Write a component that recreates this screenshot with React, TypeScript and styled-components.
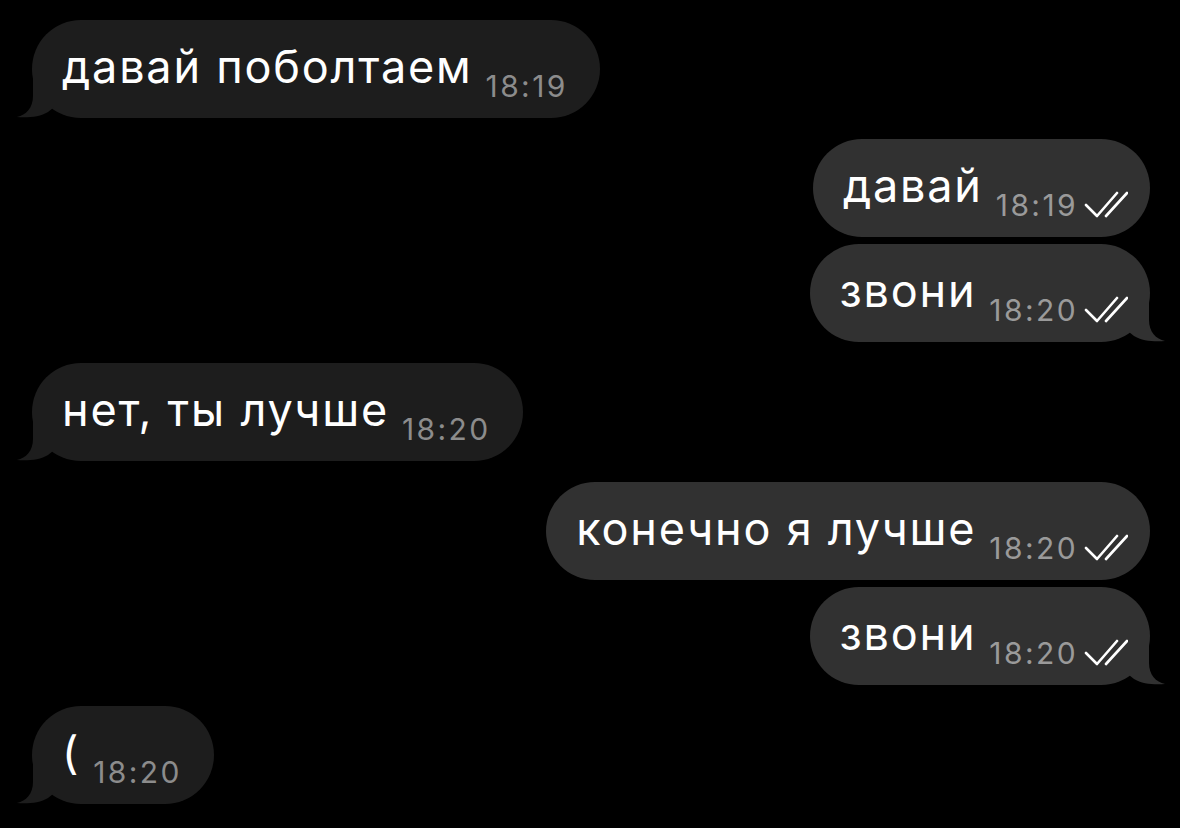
import React from "react";
import styled, { createGlobalStyle } from "styled-components";

const GlobalStyle = createGlobalStyle`
  html, body {
    margin: 0;
    padding: 0;
    background: #000;
  }
  body {
    font-family: Inter, "Liberation Sans", Arial, sans-serif;
    -webkit-font-smoothing: antialiased;
  }
`;

type Side = "in" | "out";

const Thread = styled.div`
  width: 1180px;
  height: 828px;
  box-sizing: border-box;
  padding: 20px 30px 0 32px;
  display: flex;
  flex-direction: column;
  background: #000;
  overflow: hidden;
`;

const Row = styled.div<{ $side: Side; $gap: number }>`
  display: flex;
  justify-content: ${(p) => (p.$side === "out" ? "flex-end" : "flex-start")};
  margin-top: ${(p) => p.$gap}px;
`;

const Bubble = styled.div<{ $side: Side }>`
  position: relative;
  height: 98px;
  box-sizing: border-box;
  padding: 21px ${(p) => (p.$side === "out" ? 22 : 32)}px 0 30px;
  border-radius: 49px;
  background: ${(p) => (p.$side === "out" ? "#313131" : "#1d1d1d")};
  color: #ffffff;
  font-size: 45px;
  line-height: 52px;
  letter-spacing: 1.8px;
  white-space: nowrap;
`;

const Body = styled.span`
  position: relative;
  z-index: 1;
`;

const Meta = styled.span<{ $side: Side }>`
  position: relative;
  z-index: 1;
  display: inline-flex;
  align-items: flex-end;
  gap: 6px;
  margin-left: 13px;
  vertical-align: -14px;
  font-size: 30px;
  line-height: 30px;
  letter-spacing: 2.4px;
  color: ${(p) => (p.$side === "out" ? "#9a9a9a" : "#8c8c8c")};
`;

const Tail = styled.svg<{ $side: Side }>`
  position: absolute;
  bottom: 0;
  width: 44px;
  height: 60px;
  ${(p) =>
    p.$side === "out"
      ? "right: -16px; transform: scaleX(-1);"
      : "left: -16px;"}
`;

const Ticks = styled.svg`
  width: 44px;
  height: 28px;
  margin-bottom: 2px;
  flex: none;
`;

const BubbleTail = ({ side }: { side: Side }) => (
  <Tail $side={side} viewBox="0 0 44 60" aria-hidden>
    <path
      d="M42 6 L17 6 L17 38 C17 50 10 57 1 59 C11 60 24 59 32 54 L42 46 Z"
      fill={side === "out" ? "#313131" : "#1d1d1d"}
    />
  </Tail>
);

const ReadTicks = () => (
  <Ticks viewBox="0 0 44 28" aria-hidden>
    <path
      d="M2 15 L13 26 L33 3 M22 26 L43 3"
      fill="none"
      stroke="#ffffff"
      strokeWidth="2.6"
      strokeLinecap="round"
      strokeLinejoin="round"
    />
  </Ticks>
);

type Message = {
  side: Side;
  text: string;
  time: string;
  tail: boolean;
  gap: number;
};

const messages: Message[] = [
  { side: "in", text: "давай поболтаем", time: "18:19", tail: true, gap: 0 },
  { side: "out", text: "давай", time: "18:19", tail: false, gap: 21 },
  { side: "out", text: "звони", time: "18:20", tail: true, gap: 7 },
  { side: "in", text: "нет, ты лучше", time: "18:20", tail: true, gap: 21 },
  { side: "out", text: "конечно я лучше", time: "18:20", tail: false, gap: 21 },
  { side: "out", text: "звони", time: "18:20", tail: true, gap: 7 },
  { side: "in", text: "(", time: "18:20", tail: true, gap: 21 },
];

export default function App() {
  return (
    <>
      <GlobalStyle />
      <Thread>
        {messages.map((m, i) => (
          <Row key={i} $side={m.side} $gap={m.gap}>
            <Bubble $side={m.side}>
              {m.tail && <BubbleTail side={m.side} />}
              <Body>{m.text}</Body>
              <Meta $side={m.side}>
                {m.time}
                {m.side === "out" && <ReadTicks />}
              </Meta>
            </Bubble>
          </Row>
        ))}
      </Thread>
    </>
  );
}
